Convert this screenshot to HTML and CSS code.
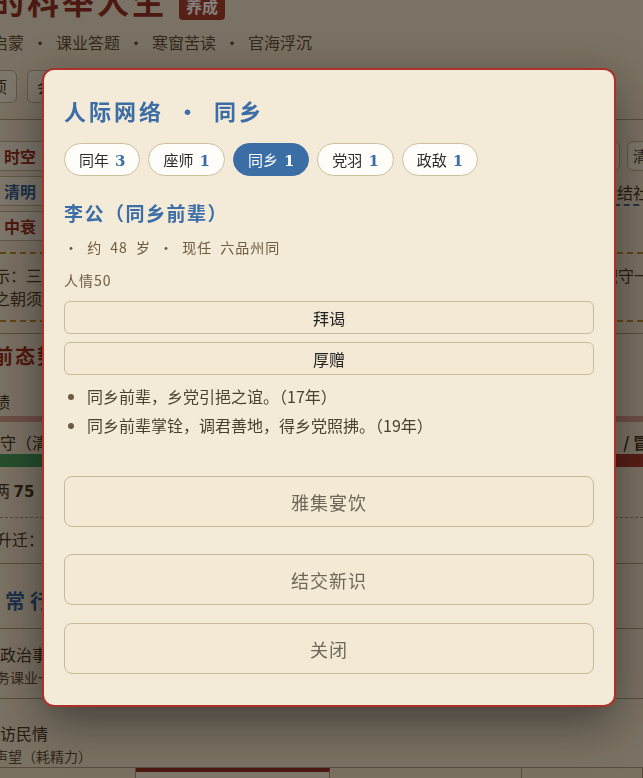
FILE: index.html
```html
<!DOCTYPE html>
<html lang="zh-CN">
<head>
<meta charset="utf-8">
<title>我的科举人生</title>
<link rel="stylesheet" href="styles.css">
</head>
<body>
<div class="page">
  <header class="hd">
    <div class="brand"><h1 class="brand-name">我的科举人生</h1><span class="badge">养成</span></div>
    <nav class="nav"><span>启蒙</span><span class="dot">·</span><span>课业答题</span><span class="dot">·</span><span>寒窗苦读</span><span class="dot">·</span><span>官海浮沉</span></nav>
    <div class="tools"><span class="tool">事项</span><span class="tool">会友</span><span class="tool">读书</span></div>
  </header>

  <section class="status">
    <div class="tags">
      <span class="tag red">时空</span>
      <span class="tag blue">清明</span>
      <span class="tag red">中衰</span>
    </div>
    <div class="status-main">
      <div class="chips">
        <span class="chip">春闱</span><span class="chip">秋试</span><span class="chip">岁考</span><span class="chip">科考</span><span class="chip">游学</span><span class="chip">清议</span>
      </div>
      <div class="links"><span class="link">诗会结社</span></div>
    </div>
  </section>

  <div class="tip">
    <p class="tip-line"><span class="cut-22">提示：三年一考，考绩优者迁擢，劣者降黜。为官之道，当以清廉为本，勤政为先，恪尽职守一方</span></p>
    <p class="tip-line"><span class="cut-22">居之朝须谨言慎行，方能善始善终。</span></p>
  </div>

  <section class="panel">
    <h2 class="ptitle red"><span class="cut-29">目前态势</span></h2>
    <div class="prow prow-top"><span class="cut-22">考绩</span></div>
    <div class="track"></div>
    <div class="prow prow-split"><span class="cut-16">太守（清正）</span><b class="right-cut">/ 冒进</b></div>
    <div class="meter"><i class="meter-good"></i><i class="meter-bad"></i></div>
    <div class="prow prow-dash"><span class="cut-22">银两 <b class="num">75</b></span></div>
    <div class="prow prow-last"><span class="cut-20">可升迁：</span></div>
  </section>

  <section class="daily">
    <h2 class="dtitle blue"><span class="cut-20">日常行事</span></h2>
    <div class="act act-1">
      <div class="act-name"><span class="cut-32">处理政治事务</span></div>
      <div class="act-desc"><span class="cut-18">公务课业一二</span></div>
    </div>
    <div class="act act-2">
      <div class="act-name"><span class="cut-16">巡访民情</span></div>
      <div class="act-desc"><span class="cut-20">增声望（耗精力）</span></div>
    </div>
  </section>

  <nav class="tabbar"><span class="tab"></span><span class="tab tab-on"></span><span class="tab"></span><span class="tab"></span></nav>
</div>

<div class="overlay">
  <div class="modal" role="dialog">
    <h2 class="m-title">人际网络<span class="m-sep">•</span>同乡</h2>
    <div class="pills">
      <span class="pill">同年<b class="pill-n">3</b></span>
      <span class="pill">座师<b class="pill-n">1</b></span>
      <span class="pill pill-on">同乡<b class="pill-n">1</b></span>
      <span class="pill">党羽<b class="pill-n">1</b></span>
      <span class="pill">政敌<b class="pill-n">1</b></span>
    </div>
    <h3 class="person">李公（同乡前辈）</h3>
    <div class="meta">· 约 48 岁 · 现任 六品州同</div>
    <div class="meta">人情50</div>
    <div class="acts">
      <button class="act-btn">拜谒</button>
      <button class="act-btn">厚赠</button>
    </div>
    <ul class="log">
      <li>同乡前辈，乡党引挹之谊。（17年）</li>
      <li>同乡前辈掌铨，调君善地，得乡党照拂。（19年）</li>
    </ul>
    <button class="big-btn big-1">雅集宴饮</button>
    <button class="big-btn big-2">结交新识</button>
    <button class="big-btn big-3">关闭</button>
  </div>
</div>
</body>
</html>
```

FILE: styles.css
```css
* { box-sizing: border-box; }
html, body { margin: 0; height: 100%; }
body {
  background: #efe3cc;
  font-family: "Noto Sans CJK SC", "Noto Sans", sans-serif;
  color: #3e3121;
  overflow: hidden;
}
.page { width: 643px; }

/* header */
.hd { margin-top: -20px; padding-bottom: 16px; border-bottom: 1px solid #a99a7c; }
.brand { display: flex; align-items: flex-end; height: 40px; margin-left: -43px; }
.brand-name { margin: 0; font-size: 32px; line-height: 40px; font-weight: 700; letter-spacing: 3px; color: #8e2b22; }
.badge { margin-left: 12px; padding: 2px 7px 3px; font-size: 16px; line-height: 22px; font-weight: 700; color: #fff; background: #a63a2c; border-radius: 4px; }
.nav { display: flex; margin: 10px 0 0 -8px; font-size: 16px; line-height: 24px; color: #5b4b37; }
.dot { width: 32px; text-align: center; }
.tools { display: flex; gap: 10px; margin: 16px 0 0 -35px; }
.tool { height: 33px; padding: 0 9px; border: 1px solid #bcae8c; border-radius: 6px; background: #f6eedd; font-size: 16px; line-height: 31px; color: #4a3c2a; }

/* status */
.status { display: flex; gap: 12px; padding: 21px 0 11px; border-bottom: 2px dashed #b8882c; }
.tags { display: flex; flex-direction: column; gap: 5px; width: 120px; margin-left: -40px; flex: none; }
.tag { height: 30px; border: 1px solid #bcae8c; border-radius: 6px; background: #f6eedd; text-align: center; font-size: 16px; font-weight: 700; line-height: 28px; }
.red { color: #962a20; }
.blue { color: #2f5d95; }
.status-main { flex: 1; min-width: 0; }
.chips { display: flex; gap: 7px; }
.chip { flex: none; width: 100px; height: 30px; padding: 0 5px; border: 1px solid #bcae8c; border-radius: 6px; background: #f6eedd; font-size: 15px; line-height: 28px; color: #4a3c2a; }
.links { display: flex; justify-content: flex-end; margin: 9px -6px 0 0; font-size: 16px; line-height: 24px; }
.link { border-bottom: 2px dashed #3d6797; color: #3e3121; }

/* tip */
.tip { padding: 10px 0; border-bottom: 2px dashed #b8882c; font-size: 16px; line-height: 23px; color: #4a3c2a; }
.tip-line { margin: 0; white-space: nowrap; }

.cut-16 { margin-left: -16px; }
.cut-18 { margin-left: -18px; }
.cut-20 { margin-left: -20px; }
.cut-22 { margin-left: -22px; }
.cut-29 { margin-left: -29px; }
.cut-32 { margin-left: -32px; }

/* panel */
.panel { margin-top: 11px; border-top: 1px solid #a99a7c; border-bottom: 1px solid #a99a7c; }
.ptitle { margin: 0; padding-top: 8px; font-size: 20px; line-height: 28px; font-weight: 700; letter-spacing: 2px; }
.prow { font-size: 16px; line-height: 24px; color: #3e3121; white-space: nowrap; }
.prow-top { margin-top: 19px; }
.track { height: 6px; margin-top: 3px; background: #d69a92; }
.prow-split { display: flex; justify-content: space-between; margin-top: 8px; }
.right-cut { margin-right: -22px; }
.meter { display: flex; height: 13px; }
.meter-good { width: 50%; background: #3f9a5e; }
.meter-bad { flex: 1; background: #a8352c; }
.prow-dash { margin-top: 11px; padding-bottom: 13px; border-bottom: 1px dashed #9d907a; }
.num { font-family: "DejaVu Sans", sans-serif; font-size: 15px; font-weight: 700; }
.prow-last { padding: 9px 0 12px; }

/* daily */
.dtitle { margin: 0; padding: 23px 0 13px; font-size: 20px; line-height: 28px; font-weight: 700; letter-spacing: 5px; border-bottom: 1px solid #a99a7c; }
.act { border-bottom: 1px solid #a99a7c; white-space: nowrap; }
.act-1 { padding: 12px 0 11px; }
.act-2 { padding: 21px 0 1px; }
.act-name { font-size: 16px; line-height: 26px; color: #3e3121; }
.act-desc { font-size: 14px; line-height: 20px; color: #5b4b37; }

.tabbar { display: grid; grid-template-columns: 136px 194px 192px 1fr; height: 20px; }
.tab { border-right: 1px solid #a99a7c; background: #ece0c7; }
.tab-on { border-top: 4px solid #8e2b22; background: #f5ecd8; }

/* overlay + modal */
.overlay { position: fixed; inset: 0; background: rgba(16, 10, 4, 0.52); }
.modal {
  width: 574px;
  margin: 68px 0 0 42px;
  padding: 25px 20px 31px;
  border: 2px solid #ab322b;
  border-radius: 12px;
  background: #f3ead7;
  box-shadow: 0 16px 48px rgba(0, 0, 0, 0.45);
  color: #2b2b2b;
}
.m-title { margin: 0; font-size: 22px; line-height: 30px; font-weight: 700; letter-spacing: 3px; color: #3b6ea6; }
.m-sep { display: inline-block; width: 50px; text-align: center; }
.pills { display: flex; gap: 8px; margin-top: 18px; }
.pill { height: 33px; padding: 0 14px; border: 1px solid #cdbf9d; border-radius: 17px; background: #fffdf9; font-size: 15px; line-height: 31px; color: #2b2b2b; }
.pill-n { margin-left: 6px; font-family: "DejaVu Serif", serif; font-size: 15px; font-weight: 700; color: #3b6ea6; }
.pill-on { background: #3b6ea5; border-color: #3b6ea5; color: #fff; }
.pill-on .pill-n { color: #fff; }
.person { margin: 24px 0 0; font-size: 19px; line-height: 26px; font-weight: 700; letter-spacing: 1.5px; color: #3b6ea6; }
.meta { margin-top: 9px; font-size: 14px; line-height: 24px; letter-spacing: 1px; word-spacing: 4px; color: #6e5b40; }
.acts { display: flex; flex-direction: column; gap: 8px; margin-top: 9px; }
.act-btn { height: 33px; border: 1px solid #c9bb98; border-radius: 6px; background: #f3e9d5; font-family: inherit; font-size: 16px; color: #222; padding: 0; }
.log { margin: 7px 0 0; padding-left: 23px; font-size: 16px; line-height: 29px; color: #4b3f2e; }
.log li::marker { color: #6b5a3e; }
.big-btn { display: block; width: 100%; height: 51px; padding: 0; border: 1px solid #c8ba96; border-radius: 8px; background: #f3e9d5; font-family: inherit; font-size: 18px; letter-spacing: 1px; color: #6f6758; }
.big-1 { margin-top: 36px; }
.big-2 { margin-top: 27px; }
.big-3 { margin-top: 18px; }
```
